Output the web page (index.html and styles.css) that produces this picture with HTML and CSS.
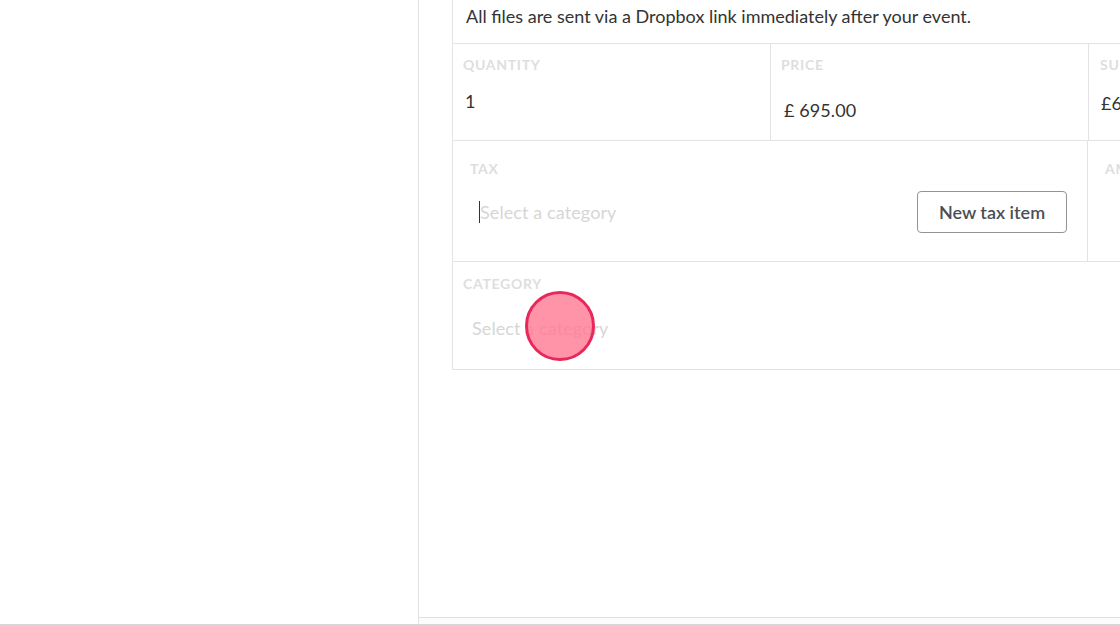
FILE: index.html
```html
<!DOCTYPE html>
<html>
<head>
<meta charset="utf-8">
<link rel="stylesheet" href="styles.css">
</head>
<body>
<div class="app">
  <aside class="sidebar"></aside>
  <main class="main">
    <div class="content">
      <div class="card">
        <div class="row desc">All files are sent via a Dropbox link immediately after your event.</div>
        <div class="row cols3">
          <div class="cell qty">
            <div class="label">QUANTITY</div>
            <div class="value">1</div>
          </div>
          <div class="cell price">
            <div class="label">PRICE</div>
            <div class="value">£ 695.00</div>
          </div>
          <div class="cell sub">
            <div class="label">SUBTOTAL</div>
            <div class="value">£695.00</div>
          </div>
        </div>
        <div class="row tax-row">
          <div class="cell tax">
            <div class="label">TAX</div>
            <div class="tax-line">
              <div class="input focused"><span class="caret"></span><span class="ph">Select a category</span></div>
              <button class="btn">New tax item</button>
            </div>
          </div>
          <div class="cell amount">
            <div class="label">AMOUNT</div>
          </div>
        </div>
        <div class="row cat-row">
          <div class="cell cat">
            <div class="label">CATEGORY</div>
            <div class="input cat-input"><span class="ph">Select a category</span></div>
          </div>
        </div>
      </div>
    </div>
    <div class="footer"></div>
  </main>
</div>
<div class="click-dot"></div>
</body>
</html>
```

FILE: styles.css
```css
* { box-sizing: border-box; }
html, body { margin: 0; padding: 0; background: #fff; }
body {
  width: 1120px;
  height: 626px;
  overflow: hidden;
  font-family: Lato, "Open Sans", sans-serif;
  color: #333;
  position: relative;
}
.app {
  display: flex;
  height: 626px;
  border-bottom: 2px solid #d6d6d6;
}
.sidebar {
  width: 419px;
  flex: none;
  border-right: 1px solid #e2e2e2;
  background: #fff;
}
.main {
  flex: 1;
  display: flex;
  flex-direction: column;
  min-width: 0;
  overflow: hidden;
}
.content {
  flex: 1;
  padding-left: 33px;
}
.footer {
  height: 7px;
  border-top: 1px solid #e0e0e0;
  background: #fcfcfc;
}
.card {
  width: 980px;
  border: 1px solid #e3e3e3;
  border-top: none;
}
.row { border-bottom: 1px solid #e3e3e3; }
.row:last-child { border-bottom: none; }
.desc {
  height: 44px;
  padding: 5px 0 0 13px;
  font-size: 18px;
  color: #333;
}
.cols3 {
  display: grid;
  grid-template-columns: 318px 318px 1fr;
  height: 97px;
}
.cell { border-right: 1px solid #e3e3e3; }
.cell:last-child { border-right: none; }
.label {
  font-size: 14px;
  font-weight: 700;
  color: #dedede;
  letter-spacing: 0.7px;
}
.value { font-size: 18px; letter-spacing: 0.1px; color: #333; }
.qty { padding: 12px 0 0 10px; }
.qty .value { margin-top: 17px; padding-left: 2px; }
.price { padding: 12px 0 0 10px; }
.price .value { margin-top: 26px; padding-left: 3px; }
.sub { padding: 12px 0 0 11px; }
.sub .value { margin-top: 19px; padding-left: 1px; }
.tax-row {
  display: grid;
  grid-template-columns: 635px 1fr;
  height: 121px;
}
.tax { padding: 19px 20px 0 17px; }
.amount { padding: 19px 0 0 17px; }
.tax-line {
  display: flex;
  align-items: center;
  justify-content: space-between;
  margin-top: 14px;
}
.input {
  display: flex;
  align-items: center;
  font-size: 18px;
  letter-spacing: 0.1px;
  height: 42px;
}
.tax .input { padding-left: 9px; }
.caret {
  width: 1px;
  height: 22px;
  background: #333;
}
.ph { color: #d6d6d6; }
.btn {
  width: 150px;
  height: 42px;
  border: 1px solid #8f9499;
  border-radius: 4px;
  background: #fff;
  font-family: inherit;
  font-size: 18px;
  font-weight: 600;
  color: #4a4f55;
  padding: 0;
}
.cat-row { height: 107px; }
.cat { padding: 13px 0 0 10px; border-right: none; }
.cat-input { margin-top: 19px; padding-left: 9px; height: 34px; }
.click-dot {
  position: absolute;
  left: 525px;
  top: 291px;
  width: 70px;
  height: 70px;
  border-radius: 50%;
  background: rgba(255, 120, 145, 0.8);
  border: 3px solid #e8285a;
}
```
